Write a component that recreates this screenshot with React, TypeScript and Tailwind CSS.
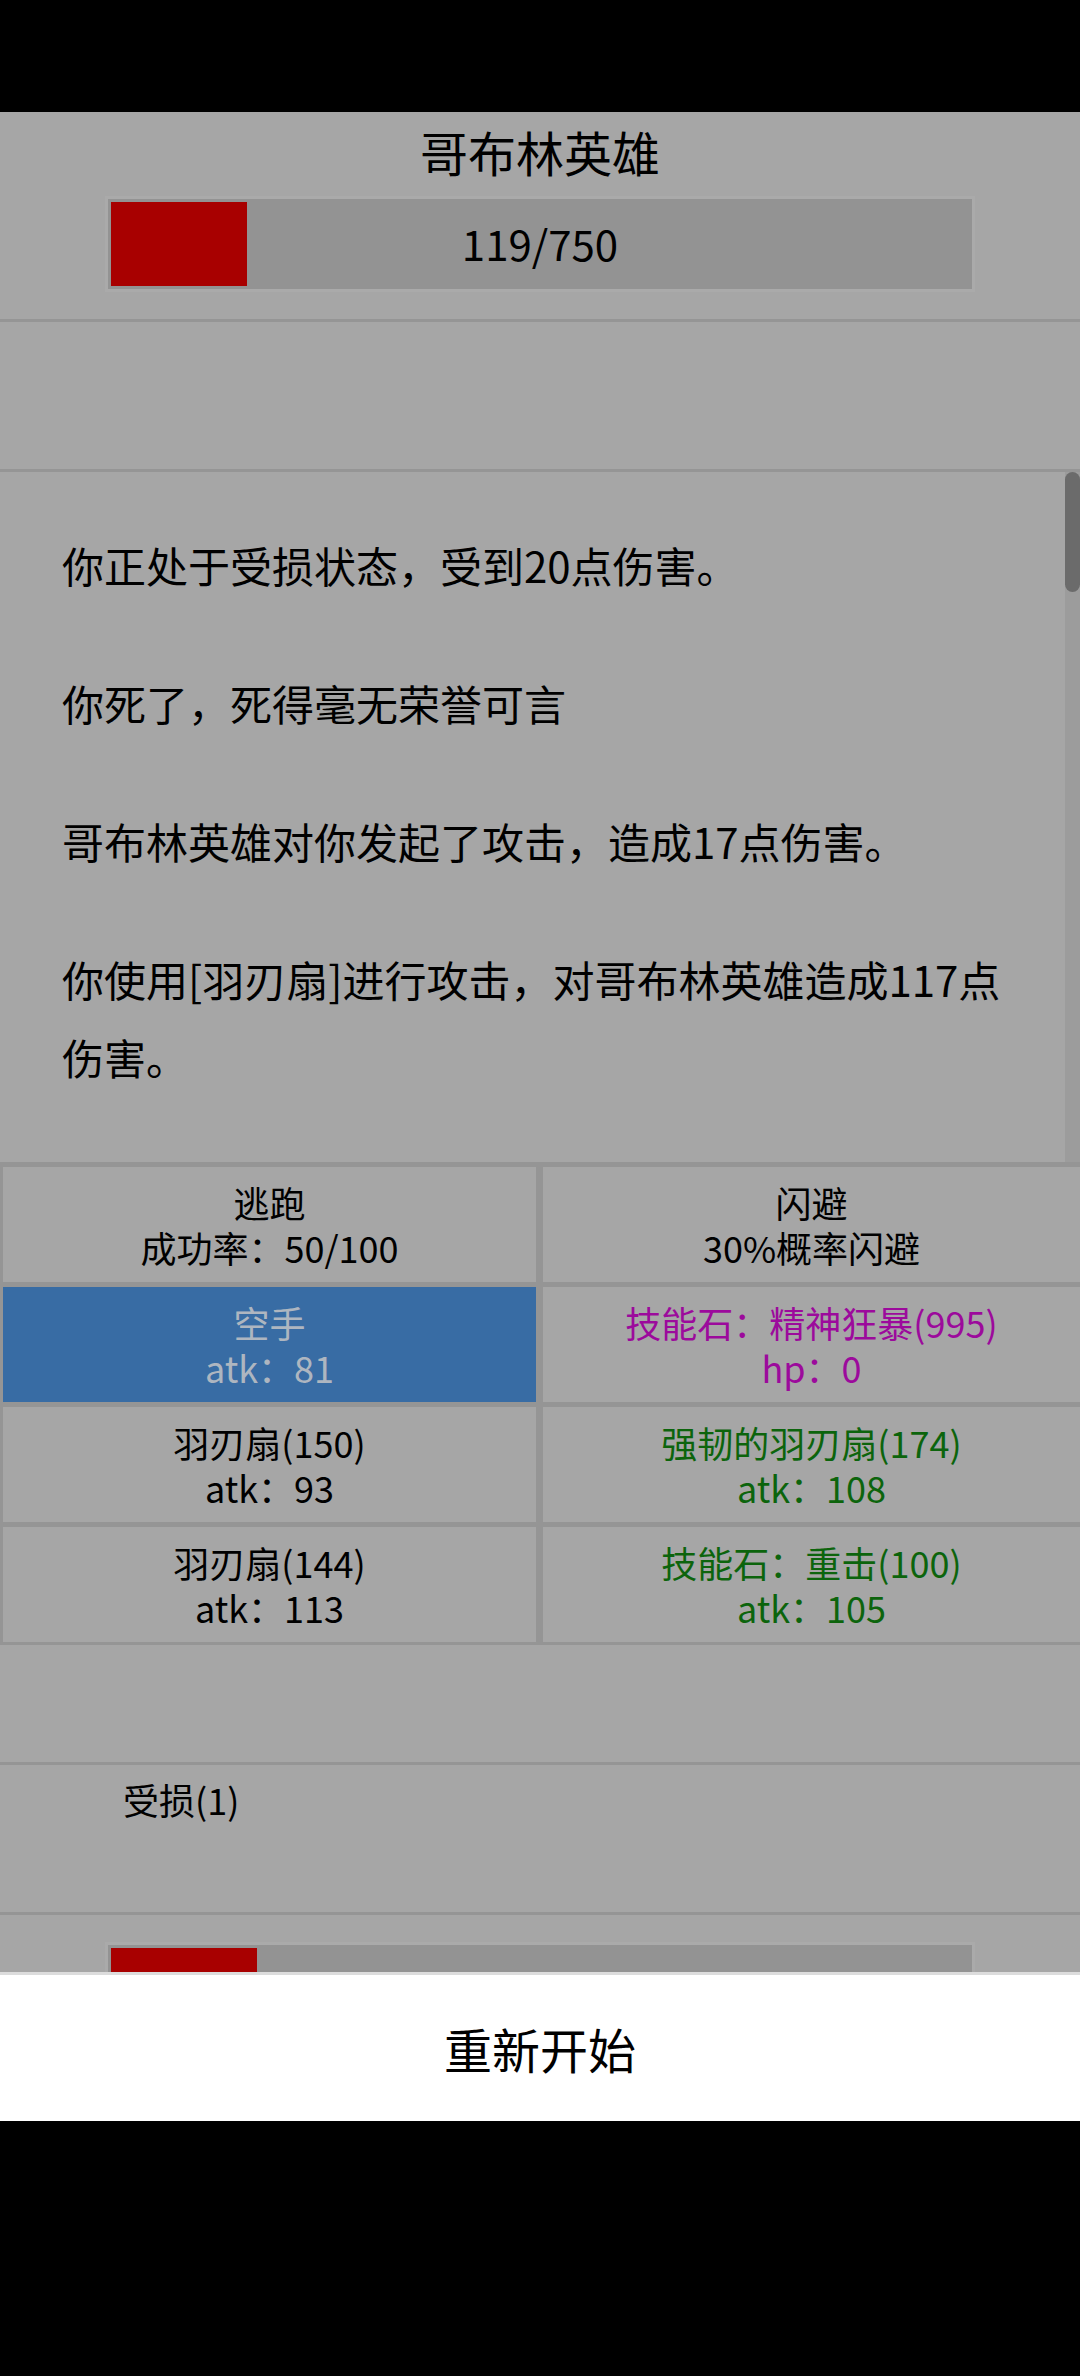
import React from "react";

type Cell = {
  name: string;
  sub: string;
  tone?: "black" | "magenta" | "green" | "active";
};

const cells: Cell[] = [
  { name: "逃跑", sub: "成功率：50/100" },
  { name: "闪避", sub: "30%概率闪避" },
  { name: "空手", sub: "atk：81", tone: "active" },
  { name: "技能石：精神狂暴(995)", sub: "hp：0", tone: "magenta" },
  { name: "羽刃扇(150)", sub: "atk：93" },
  { name: "强韧的羽刃扇(174)", sub: "atk：108", tone: "green" },
  { name: "羽刃扇(144)", sub: "atk：113" },
  { name: "技能石：重击(100)", sub: "atk：105", tone: "green" },
];

const logs = [
  "你正处于受损状态，受到20点伤害。",
  "你死了，死得毫无荣誉可言",
  "哥布林英雄对你发起了攻击，造成17点伤害。",
  "你使用[羽刃扇]进行攻击，对哥布林英雄造成117点伤害。",
];

function HpBar({ hp, max }: { hp: number; max: number }) {
  return (
    <div className="relative w-[864px] h-[90px] bg-[#939393] p-[3px] outline outline-[3px] outline-[#aaaaaa]">
      <div className="h-full bg-[#a80000]" style={{ width: `${(hp / max) * 858}px` }} />
    </div>
  );
}

function ActionCell({ cell }: { cell: Cell }) {
  const bg = cell.tone === "active" ? "bg-[#386ca4]" : "bg-[#a6a6a6]";
  const color =
    cell.tone === "active"
      ? "text-[#aeb6c0]"
      : cell.tone === "magenta"
      ? "text-[#9c0a9c]"
      : cell.tone === "green"
      ? "text-[#0c640c]"
      : "text-black";
  return (
    <div className={`${bg} ${color} h-[115px] flex flex-col items-center justify-center text-[36px] leading-[45px]`}>
      <div>{cell.name}</div>
      <div>{cell.sub}</div>
    </div>
  );
}

export default function App() {
  return (
    <div className="w-[1080px] h-[2376px] bg-black flex flex-col font-['Noto_Sans_CJK_SC','Noto_Sans',sans-serif]">
      <div className="h-[112px] shrink-0" />

      <div className="h-[1860px] shrink-0 overflow-hidden bg-[#a6a6a6] flex flex-col">
        {/* enemy */}
        <div className="h-[207px] shrink-0 flex flex-col items-center pt-[7px]">
          <div className="text-[48px] leading-[64px] text-black">哥布林英雄</div>
          <div className="relative mt-[16px]">
            <HpBar hp={119} max={750} />
            <div className="absolute inset-0 flex items-center justify-center text-[42px] text-black pb-[3px]">119/750</div>
          </div>
        </div>
        <div className="h-[3px] shrink-0 bg-[#959595]" />
        <div className="h-[147px] shrink-0" />
        <div className="h-[3px] shrink-0 bg-[#959595]" />

        {/* battle log */}
        <div className="relative h-[690px] shrink-0 overflow-hidden">
          <div className="pl-[62px] pr-[62px] pt-[54px] flex flex-col gap-[60px] text-[42px] leading-[78px] text-black">
            {logs.map((l, i) => (
              <p key={i}>{l}</p>
            ))}
          </div>
          <div className="absolute right-0 top-0 bottom-0 w-[15px] bg-[#9c9c9c]">
            <div className="h-[120px] w-full rounded-full bg-[#6b6b6b]" />
          </div>
        </div>

        {/* actions */}
        <div className="shrink-0 bg-[#959595] grid grid-cols-[533px_537px] gap-x-[7px] gap-y-[5px] pt-[5px] pb-[3px] pl-[3px]">
          {cells.map((c, i) => (
            <ActionCell key={i} cell={c} />
          ))}
        </div>

        <div className="h-[117px] shrink-0" />
        <div className="h-[3px] shrink-0 bg-[#959595]" />

        {/* status */}
        <div className="h-[147px] shrink-0 pl-[123px] pt-[12px] text-[36px] leading-[45px] text-black">受损(1)</div>
        <div className="h-[3px] shrink-0 bg-[#959595]" />

        {/* player */}
        <div className="shrink-0 flex justify-center pt-[30px]">
          <HpBar hp={128} max={750} />
        </div>
      </div>

      <button className="h-[149px] shrink-0 bg-white border-t-[3px] border-[#dcdcdc] flex items-center justify-center text-[48px] text-black">
        重新开始
      </button>
    </div>
  );
}
